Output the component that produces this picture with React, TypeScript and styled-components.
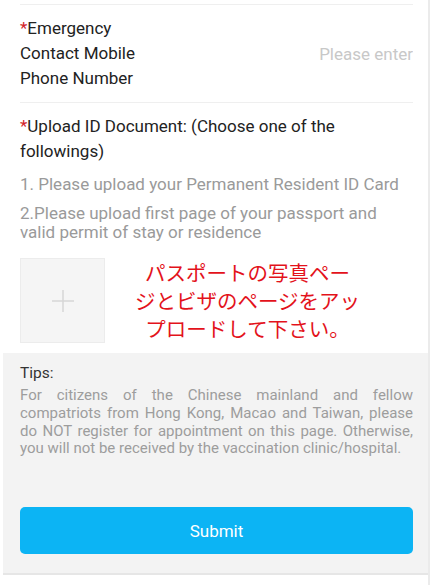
import React from "react";
import styled, { createGlobalStyle } from "styled-components";

const GlobalStyle = createGlobalStyle`
  html, body { margin: 0; padding: 0; background: #fff; }
  body { font-family: Roboto, "Noto Sans", "Noto Sans CJK JP", sans-serif; }
`;

const Page = styled.div`
  width: 430px;
  height: 585px;
  box-sizing: border-box;
  border-right: 2px solid #ebebeb;
  padding-top: 4px;
  overflow: hidden;
`;

const Form = styled.div`
  padding: 0 15px 0 20px;
`;

const FieldRow = styled.div`
  display: flex;
  align-items: center;
  border-top: 1px solid #efefef;
  border-bottom: 1px solid #efefef;
  padding: 11px 0 11px;
  font-size: 17px;
  line-height: 25px;
  color: #222;
`;

const Label = styled.div`
  width: 125px;
  flex-shrink: 0;
`;

const Star = styled.span`
  color: #d2232a;
`;

const Input = styled.input`
  flex: 1;
  min-width: 0;
  border: none;
  outline: none;
  background: none;
  text-align: right;
  font-family: inherit;
  font-size: 17px;
  padding: 0;
  color: #222;
  &::placeholder { color: #c8c8c8; }
`;

const UploadSection = styled.div`
  padding-top: 11px;
`;

const Title = styled.div`
  font-size: 17px;
  line-height: 25px;
  color: #222;
`;

const Hint = styled.div<{ $lh: number }>`
  margin-top: 10px;
  font-size: 17px;
  line-height: ${(p) => p.$lh}px;
  color: #9a9a9a;
`;

const UploadRow = styled.div`
  display: flex;
  align-items: flex-start;
  margin-top: 16px;
`;

const UploadBox = styled.div`
  width: 85px;
  height: 85px;
  box-sizing: border-box;
  background: #f5f5f5;
  border: 1px solid #ececec;
  display: flex;
  align-items: center;
  justify-content: center;
  flex-shrink: 0;
`;

const Note = styled.div`
  margin-left: 15px;
  width: 255px;
  text-align: center;
  font-family: "Noto Sans CJK JP", sans-serif;
  font-size: 20.5px;
  line-height: 28px;
  color: #e3121b;
  white-space: nowrap;
`;

const Tips = styled.div`
  margin: 10px 0 0 3px;
  background: #f3f3f3;
  padding: 10px 15px 19px 17px;
  border-bottom: 2px solid #e6e6e6;
`;

const TipsTitle = styled.div`
  font-size: 15.5px;
  line-height: 20px;
  color: #333;
`;

const TipsText = styled.div`
  margin-top: 4px;
  font-size: 15px;
  line-height: 17.8px;
  color: #9d9d9d;
  text-align: justify;
`;

const SubmitButton = styled.button`
  display: block;
  width: 100%;
  height: 47px;
  margin-top: 49px;
  border: none;
  border-radius: 5px;
  background: #0cb4f4;
  color: #fff;
  font-family: inherit;
  font-size: 17px;
`;

function App() {
  return (
    <Page>
      <GlobalStyle />
      <Form>
        <FieldRow>
          <Label>
            <Star>*</Star>Emergency Contact Mobile Phone Number
          </Label>
          <Input placeholder="Please enter" />
        </FieldRow>
        <UploadSection>
          <Title>
            <Star>*</Star>Upload ID Document: (Choose one of the followings)
          </Title>
          <Hint $lh={20}>1. Please upload your Permanent Resident ID Card</Hint>
          <Hint $lh={19}>
            2.Please upload first page of your passport and valid permit of stay or residence
          </Hint>
          <UploadRow>
            <UploadBox>
              <svg width="22" height="22" viewBox="0 0 22 22">
                <path d="M11 0v22M0 11h22" stroke="#d6d6d6" strokeWidth="1.5" fill="none" />
              </svg>
            </UploadBox>
            <Note>
              パスポートの写真ペー
              <br />
              ジとビザのページをアッ
              <br />
              プロードして下さい。
            </Note>
          </UploadRow>
        </UploadSection>
      </Form>
      <Tips>
        <TipsTitle>Tips:</TipsTitle>
        <TipsText>
          For citizens of the Chinese mainland and fellow compatriots from Hong Kong, Macao and
          Taiwan, please do NOT register for appointment on this page. Otherwise, you will not be
          received by the vaccination clinic/hospital.
        </TipsText>
        <SubmitButton>Submit</SubmitButton>
      </Tips>
    </Page>
  );
}

export default App;
